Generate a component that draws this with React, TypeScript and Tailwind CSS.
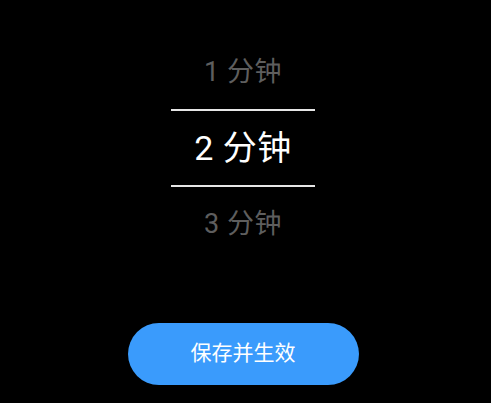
const font = "font-['Roboto','Noto_Sans_CJK_SC',sans-serif]";

export default function App() {
  return (
    <main
      className={`flex h-[403px] w-[491px] flex-col items-center bg-black pt-[36px] pr-[5px] ${font}`}
    >
      <div className="flex h-[73px] items-center text-[27px] tracking-[0.5px] text-[#5e5e5e]">
        1 分钟
      </div>
      <div className="h-[2px] w-[144px] bg-[#e6e6e6]" />
      <div className="flex h-[74px] items-center text-[34px] tracking-[0.5px] text-white">
        2 分钟
      </div>
      <div className="h-[2px] w-[144px] bg-[#e6e6e6]" />
      <div className="flex h-[74px] items-center text-[27px] tracking-[0.5px] text-[#5e5e5e]">
        3 分钟
      </div>
      <button className="mt-[62px] flex h-[62px] w-[231px] items-center justify-center rounded-full bg-[#3a9bfc] text-[21px] text-white">
        保存并生效
      </button>
    </main>
  );
}
